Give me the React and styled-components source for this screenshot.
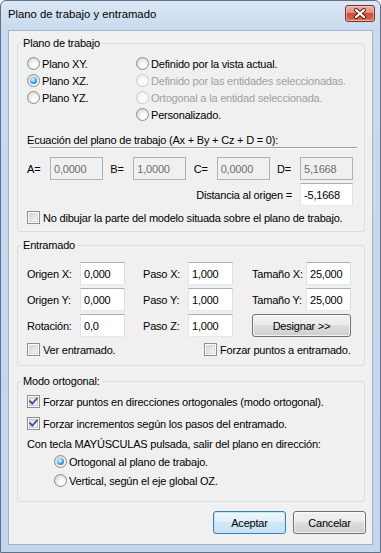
import React from 'react';
import styled, { createGlobalStyle } from 'styled-components';

const FONT = `"Liberation Sans", Arial, sans-serif`;

const Global = createGlobalStyle`
  html, body { margin: 0; padding: 0; background: #fff; }
  body { font-family: ${FONT}; font-size: 11px; letter-spacing: -0.2px; color: #000; }
  * { box-sizing: border-box; }
`;

const Window = styled.div`
  width: 381px;
  height: 553px;
  display: flex;
  flex-direction: column;
  border: 1px solid #5f7186;
  border-radius: 6px 6px 0 0;
  background: linear-gradient(#dae6f4, #c9daee 30px, #c4d6eb);
  padding: 0 7px 7px;
`;

const TitleBar = styled.div`
  height: 29px;
  display: flex;
  justify-content: space-between;
  align-items: flex-start;
  flex: none;
`;

const Title = styled.div`
  margin-top: 5px;
  line-height: 16px;
  font-size: 11.3px;
  letter-spacing: 0;
  color: #000;
`;

const CloseButton = styled.button`
  margin-top: 4px;
  margin-right: -2px;
  width: 30px;
  height: 17px;
  padding: 0;
  border: 1px solid #7b2e22;
  border-radius: 3px;
  background: linear-gradient(#eab1a4, #dc8d7c 45%, #c74e38 50%, #d0644d 85%, #e08a6f);
  box-shadow: inset 0 0 0 1px rgba(255, 220, 210, 0.55);
  display: flex;
  align-items: center;
  justify-content: center;
`;

const Client = styled.div`
  flex: 1;
  background: #f0f0f0;
  border: 1px solid #a0b3c9;
  padding: 5px 7px 0 8px;
  display: flex;
  flex-direction: column;
`;

const Group = styled.fieldset`
  margin: ${p => p.$mt || 0}px 0 0;
  padding: 0;
  border: 1px solid #d5dfe5;
  border-radius: 3px;
  min-width: 0;
`;

const Legend = styled.legend`
  margin-left: 3px;
  padding: 0 2px;
  line-height: 14px;
`;

const GroupBody = styled.div`
  padding: ${p => p.$pad};
  display: flex;
  flex-direction: column;
`;

const RadioColumns = styled.div`
  display: grid;
  grid-template-columns: 109px 1fr;
`;

const Column = styled.div`
  display: flex;
  flex-direction: column;
`;

const Option = styled.label`
  height: 17px;
  display: flex;
  align-items: center;
  gap: ${p => (p.$box ? 3 : 2)}px;
  margin: ${p => p.$m || '0'};
  color: ${p => (p.$disabled ? '#a0a0a0' : '#000')};
  white-space: nowrap;
`;

const RadioMark = styled.span`
  width: 13px;
  height: 13px;
  flex: none;
  border-radius: 50%;
  border: 1px solid ${p => (p.$disabled ? '#cbcbcb' : '#8b8b8b')};
  background: ${p =>
    p.$disabled
      ? 'radial-gradient(circle at 60% 65%, #fcfcfc 0 30%, #f0f0f0 70%, #e6e6e6)'
      : 'radial-gradient(circle at 62% 66%, #ffffff 0 22%, #e4e4e4 60%, #cdcdcd)'};
  display: flex;
  align-items: center;
  justify-content: center;
  &::after {
    content: '';
    display: ${p => (p.$checked ? 'block' : 'none')};
    width: 7px;
    height: 7px;
    border-radius: 50%;
    background: radial-gradient(circle at 40% 35%, #c5ecff 0 15%, #3ea3ea 55%, #0d4f98);
  }
`;

const CheckMark = styled.span`
  position: relative;
  width: 13px;
  height: 13px;
  flex: none;
  border: 1px solid #8e8f8f;
  background: #fff;
  padding: 1px;
  display: flex;
  &::before {
    content: '';
    flex: 1;
    background: ${p =>
      p.$checked
        ? 'linear-gradient(135deg, #d8dde9, #f5f7fb)'
        : 'linear-gradient(135deg, #d5d5d5, #f6f6f6)'};
    border: 1px solid ${p => (p.$checked ? '#c3cad9' : '#dadada')};
  }
  svg {
    position: absolute;
    left: -1px;
    top: -1px;
  }
`;

const Text = styled.span`
  line-height: 14px;
`;

const Caption = styled.div`
  line-height: 14px;
  margin-top: ${p => p.$mt || 0}px;
  white-space: nowrap;
`;

const Separator = styled.div`
  height: 2px;
  margin: 0 -4px 0 3px;
  border-top: 1px solid #a0a0a0;
  border-bottom: 1px solid #fff;
`;

const CoefRow = styled.div`
  margin-top: 8px;
  display: flex;
  justify-content: space-between;
`;

const Coef = styled.div`
  display: flex;
  align-items: center;
`;

const CoefLabel = styled.span`
  width: 23px;
`;

const Field = styled.input`
  width: ${p => p.$w || 45}px;
  height: 23px;
  padding: 0 3px;
  margin: 0;
  font: inherit;
  letter-spacing: inherit;
  color: ${p => (p.disabled ? '#6d6d6d' : '#000')};
  background: ${p => (p.disabled ? '#f0f0f0' : '#fff')};
  border: 1px solid;
  border-color: ${p =>
    p.disabled ? '#adb2b5' : '#abadb3 #dbdfe6 #e3e9ef #e2e3ea'};
  border-radius: 0;
  outline: none;
`;

const DistanceRow = styled.div`
  margin-top: 3px;
  display: flex;
  justify-content: flex-end;
  align-items: center;
  gap: 8px;
`;

const GridForm = styled.div`
  display: grid;
  grid-template-columns: 53px 45px 63px 45px 73px 45px;
  grid-auto-rows: 23px;
  row-gap: 3px;
  align-items: center;
`;

const GridLabel = styled.span`
  padding-left: ${p => p.$indent || 0}px;
  white-space: nowrap;
`;

const Button = styled.button`
  height: 23px;
  width: ${p => p.$w || 73}px;
  margin: 0;
  padding: 0;
  font: inherit;
  letter-spacing: inherit;
  color: #000;
  border: 1px solid ${p => (p.$default ? '#3c7fb1' : '#707070')};
  border-radius: 3px;
  background: ${p =>
    p.$default
      ? 'linear-gradient(#edf6fc, #e2f0f9 45%, #d0e8f6 50%, #c2e0f3)'
      : 'linear-gradient(#f2f2f2, #ebebeb 45%, #dddddd 50%, #cfcfcf)'};
  box-shadow: inset 0 0 0 1px ${p => (p.$default ? 'rgba(190,230,252,0.9)' : 'rgba(255,255,255,0.7)')};
`;

const DesignButton = styled(Button)`
  grid-column: 5 / 7;
  margin-left: 19px;
  width: auto;
`;

const CheckRow = styled.div`
  margin-top: 4px;
  display: flex;
`;

const CheckCell = styled.div`
  width: ${p => (p.$w ? `${p.$w}px` : 'auto')};
`;

const ButtonRow = styled.div`
  margin-top: 9px;
  margin-right: -1px;
  display: flex;
  justify-content: flex-end;
  gap: 7px;
`;

function Radio({ label, checked, disabled, m }) {
  return (
    <Option $disabled={disabled} $m={m}>
      <RadioMark $checked={checked} $disabled={disabled} />
      <Text>{label}</Text>
    </Option>
  );
}

function Check({ label, checked, m }) {
  return (
    <Option $m={m} $box>
      <CheckMark $checked={checked}>
        {checked && (
          <svg width="13" height="13" viewBox="0 0 13 13">
            <path d="M3 6.2 L5.3 8.6 L10 3.4" fill="none" stroke="#3f5487" strokeWidth="1.8" strokeLinecap="square" />
          </svg>
        )}
      </CheckMark>
      <Text>{label}</Text>
    </Option>
  );
}

export default function App() {
  return (
    <>
      <Global />
      <Window>
        <TitleBar>
          <Title>Plano de trabajo y entramado</Title>
          <CloseButton aria-label="Cerrar">
            <svg width="14" height="11" viewBox="0 0 14 11">
              <path d="M3 2 L11 9 M11 2 L3 9" stroke="#5a1f16" strokeWidth="4" strokeLinecap="round" />
              <path d="M3 2 L11 9 M11 2 L3 9" stroke="#fff" strokeWidth="2.2" strokeLinecap="round" />
            </svg>
          </CloseButton>
        </TitleBar>
        <Client>
          <Group>
            <Legend>Plano de trabajo</Legend>
            <GroupBody $pad="5px 11px 5px 9px">
              <RadioColumns>
                <Column>
                  <Radio label="Plano XY." />
                  <Radio label="Plano XZ." checked />
                  <Radio label="Plano YZ." />
                </Column>
                <Column>
                  <Radio label="Definido por la vista actual." />
                  <Radio label="Definido por las entidades seleccionadas." disabled />
                  <Radio label="Ortogonal a la entidad seleccionada." disabled />
                  <Radio label="Personalizado." />
                </Column>
              </RadioColumns>
              <Caption $mt={10}>Ecuación del plano de trabajo (Ax + By + Cz + D = 0):</Caption>
              <Separator />
              <CoefRow>
                <Coef><CoefLabel>A=</CoefLabel><Field $w={53} disabled defaultValue="0,0000" /></Coef>
                <Coef><CoefLabel>B=</CoefLabel><Field $w={53} disabled defaultValue="1,0000" /></Coef>
                <Coef><CoefLabel>C=</CoefLabel><Field $w={53} disabled defaultValue="0,0000" /></Coef>
                <Coef><CoefLabel>D=</CoefLabel><Field $w={53} disabled defaultValue="5,1668" /></Coef>
              </CoefRow>
              <DistanceRow>
                <span>Distancia al origen =</span>
                <Field $w={53} defaultValue="-5,1668" />
              </DistanceRow>
              <Check m="3px 0 0" label="No dibujar la parte del modelo situada sobre el plano de trabajo." />
            </GroupBody>
          </Group>

          <Group $mt={6}>
            <Legend>Entramado</Legend>
            <GroupBody $pad="10px 11px 7px 9px">
              <GridForm>
                <GridLabel>Origen X:</GridLabel>
                <Field defaultValue="0,000" />
                <GridLabel $indent={18}>Paso X:</GridLabel>
                <Field defaultValue="1,000" />
                <GridLabel $indent={19}>Tamaño X:</GridLabel>
                <Field defaultValue="25,000" />

                <GridLabel>Origen Y:</GridLabel>
                <Field defaultValue="0,000" />
                <GridLabel $indent={18}>Paso Y:</GridLabel>
                <Field defaultValue="1,000" />
                <GridLabel $indent={19}>Tamaño Y:</GridLabel>
                <Field defaultValue="25,000" />

                <GridLabel>Rotación:</GridLabel>
                <Field defaultValue="0,0" />
                <GridLabel $indent={18}>Paso Z:</GridLabel>
                <Field defaultValue="1,000" />
                <DesignButton>Designar &gt;&gt;</DesignButton>
              </GridForm>
              <CheckRow>
                <CheckCell $w={177}><Check label="Ver entramado." /></CheckCell>
                <CheckCell><Check label="Forzar puntos a entramado." /></CheckCell>
              </CheckRow>
            </GroupBody>
          </Group>

          <Group $mt={8}>
            <Legend>Modo ortogonal:</Legend>
            <GroupBody $pad="5px 11px 12px 9px">
              <Check checked label="Forzar puntos en direcciones ortogonales (modo ortogonal)." />
              <Check checked m="5px 0 0" label="Forzar incrementos según los pasos del entramado." />
              <Caption $mt={5}>Con tecla MAYÚSCULAS pulsada, salir del plano en dirección:</Caption>
              <Radio m="2px 0 0 27px" checked label="Ortogonal al plano de trabajo." />
              <Radio m="2px 0 0 27px" label="Vertical, según el eje global OZ." />
            </GroupBody>
          </Group>

          <ButtonRow>
            <Button $default>Aceptar</Button>
            <Button>Cancelar</Button>
          </ButtonRow>
        </Client>
      </Window>
    </>
  );
}
